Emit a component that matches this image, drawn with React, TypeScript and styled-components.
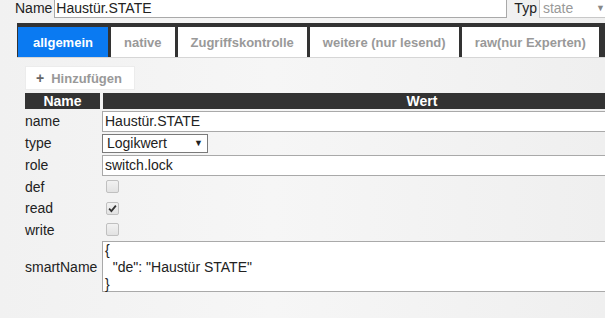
import React from "react";
import styled, { createGlobalStyle } from "styled-components";

const Global = createGlobalStyle`
  html, body { margin: 0; padding: 0; }
  body {
    background: linear-gradient(90deg, #f1f1f1 0%, #f6f6f6 45%, #efefef 100%);
    font-family: "Liberation Sans", Arial, sans-serif;
    color: #222;
    overflow: hidden;
    width: 605px;
    height: 318px;
  }
`;

const Page = styled.div`
  padding-left: 15px;
  width: 760px;
`;

const TopRow = styled.div`
  display: flex;
  align-items: center;
  height: 18px;
  margin-top: -1px;
  font-size: 14px;
`;

const TopLabel = styled.span<{ $gap?: number }>`
  margin-left: ${(p) => p.$gap ?? 0}px;
  margin-right: 2px;
  color: #222;
`;

const TextBox = styled.div<{ $w: number }>`
  box-sizing: border-box;
  width: ${(p) => p.$w}px;
  height: 19px;
  background: #fff;
  border: 1px solid #a9a9a9;
  padding: 0 1px;
  font-size: 14px;
  line-height: 17px;
  white-space: nowrap;
  overflow: hidden;
`;

const TypSelect = styled.div`
  box-sizing: border-box;
  width: 68px;
  height: 19px;
  background: #fff;
  border: 1px solid #c8c8c8;
  padding: 0 1px 0 3px;
  font-size: 14px;
  line-height: 17px;
  color: #999;
  display: flex;
  justify-content: space-between;
`;

const Arrow = styled.span<{ $c: string }>`
  font-size: 9px;
  color: ${(p) => p.$c};
`;

const TabBar = styled.div`
  margin-top: 6px;
  margin-left: 2px;
  height: 35px;
  box-sizing: border-box;
  background: #333;
  padding: 4px 0 0 1px;
  display: flex;
  gap: 3px;
  border-bottom: 1px solid #d6d6d6;
`;

const Tab = styled.div<{ $active?: boolean; $pad: number }>`
  height: 30px;
  padding: 0 ${(p) => p.$pad}px;
  display: flex;
  align-items: center;
  font-size: 13px;
  font-weight: bold;
  background: ${(p) => (p.$active ? "#0a7af2" : "#fff")};
  color: ${(p) => (p.$active ? "#fff" : "#999")};
  white-space: nowrap;
`;

const Content = styled.div`
  padding-left: 10px;
`;

const AddButton = styled.div`
  margin-top: 8px;
  box-sizing: border-box;
  width: 110px;
  height: 24px;
  background: #fff;
  border: 1px solid #ececec;
  display: flex;
  align-items: center;
  padding-left: 10px;
  font-size: 13px;
  font-weight: bold;
  color: #999;
`;

const Plus = styled.span`
  color: #666;
  margin-right: 7px;
  font-size: 14px;
`;

const Table = styled.div`
  margin-top: 3px;
  width: 716px;
  display: grid;
  grid-template-columns: 75px 1fr;
  grid-template-rows: 16px 20px 20px 20px 19px 20px 19px 51px;
  column-gap: 3px;
  row-gap: 2px;
`;

const HeadCell = styled.div`
  background: #333;
  color: #fff;
  font-size: 14px;
  font-weight: bold;
  text-align: center;
  line-height: 16px;
`;

const Label = styled.div`
  font-size: 14px;
  display: flex;
  align-items: center;
  color: #222;
`;

const ValueCell = styled.div`
  display: flex;
  align-items: center;
  margin-left: -1px;
`;

const WideInput = styled.div`
  box-sizing: border-box;
  width: 100%;
  height: 21px;
  background: #fff;
  border: 1px solid #a9a9a9;
  padding: 0 2px;
  font-size: 14px;
  line-height: 19px;
`;

const SelectBox = styled.div`
  box-sizing: border-box;
  width: 106px;
  height: 19px;
  background: #fff;
  border: 1px solid #7a7a7a;
  padding: 0 4px 0 4px;
  font-size: 14px;
  line-height: 17px;
  display: flex;
  justify-content: space-between;
  align-items: center;
`;

const Check = styled.span`
  box-sizing: border-box;
  width: 13px;
  height: 13px;
  margin-left: 4px;
  border: 1px solid #c0c0c0;
  border-radius: 2px;
  background: linear-gradient(#f2f2f2, #e2e2e2);
  display: flex;
  align-items: center;
  justify-content: center;
`;

const TextArea = styled.div`
  box-sizing: border-box;
  width: 100%;
  height: 51px;
  background: #fff;
  border: 1px solid #a9a9a9;
  padding: 0 2px;
  font-size: 14px;
  line-height: 17px;
  white-space: pre;
`;

const CheckBox = ({ checked }: { checked?: boolean }) => (
  <Check>
    {checked && (
      <svg width="9" height="9" viewBox="0 0 8 8">
        <path d="M1 4.2 L3 6.3 L7 1.5" fill="none" stroke="#333" strokeWidth="1.6" />
      </svg>
    )}
  </Check>
);

export default function App() {
  return (
    <Page>
      <Global />
      <TopRow>
        <TopLabel>Name</TopLabel>
        <TextBox $w={453}>Haustür.STATE</TextBox>
        <TopLabel $gap={7}>Typ</TopLabel>
        <TypSelect>
          <span>state</span>
          <Arrow $c="#888">▼</Arrow>
        </TypSelect>
      </TopRow>
      <TabBar>
        <Tab $active $pad={15}>allgemein</Tab>
        <Tab $pad={13}>native</Tab>
        <Tab $pad={13}>Zugriffskontrolle</Tab>
        <Tab $pad={13}>weitere (nur lesend)</Tab>
        <Tab $pad={13}>raw(nur Experten)</Tab>
      </TabBar>
      <Content>
        <AddButton>
          <Plus>+</Plus>Hinzufügen
        </AddButton>
        <Table>
          <HeadCell>Name</HeadCell>
          <HeadCell>Wert</HeadCell>

          <Label>name</Label>
          <ValueCell>
            <WideInput>Haustür.STATE</WideInput>
          </ValueCell>

          <Label>type</Label>
          <ValueCell>
            <SelectBox>
              <span>Logikwert</span>
              <Arrow $c="#222">▼</Arrow>
            </SelectBox>
          </ValueCell>

          <Label>role</Label>
          <ValueCell>
            <WideInput>switch.lock</WideInput>
          </ValueCell>

          <Label>def</Label>
          <ValueCell>
            <CheckBox />
          </ValueCell>

          <Label>read</Label>
          <ValueCell>
            <CheckBox checked />
          </ValueCell>

          <Label>write</Label>
          <ValueCell>
            <CheckBox />
          </ValueCell>

          <Label>smartName</Label>
          <ValueCell>
            <TextArea>{'{\n  "de": "Haustür STATE"\n}'}</TextArea>
          </ValueCell>
        </Table>
      </Content>
    </Page>
  );
}
